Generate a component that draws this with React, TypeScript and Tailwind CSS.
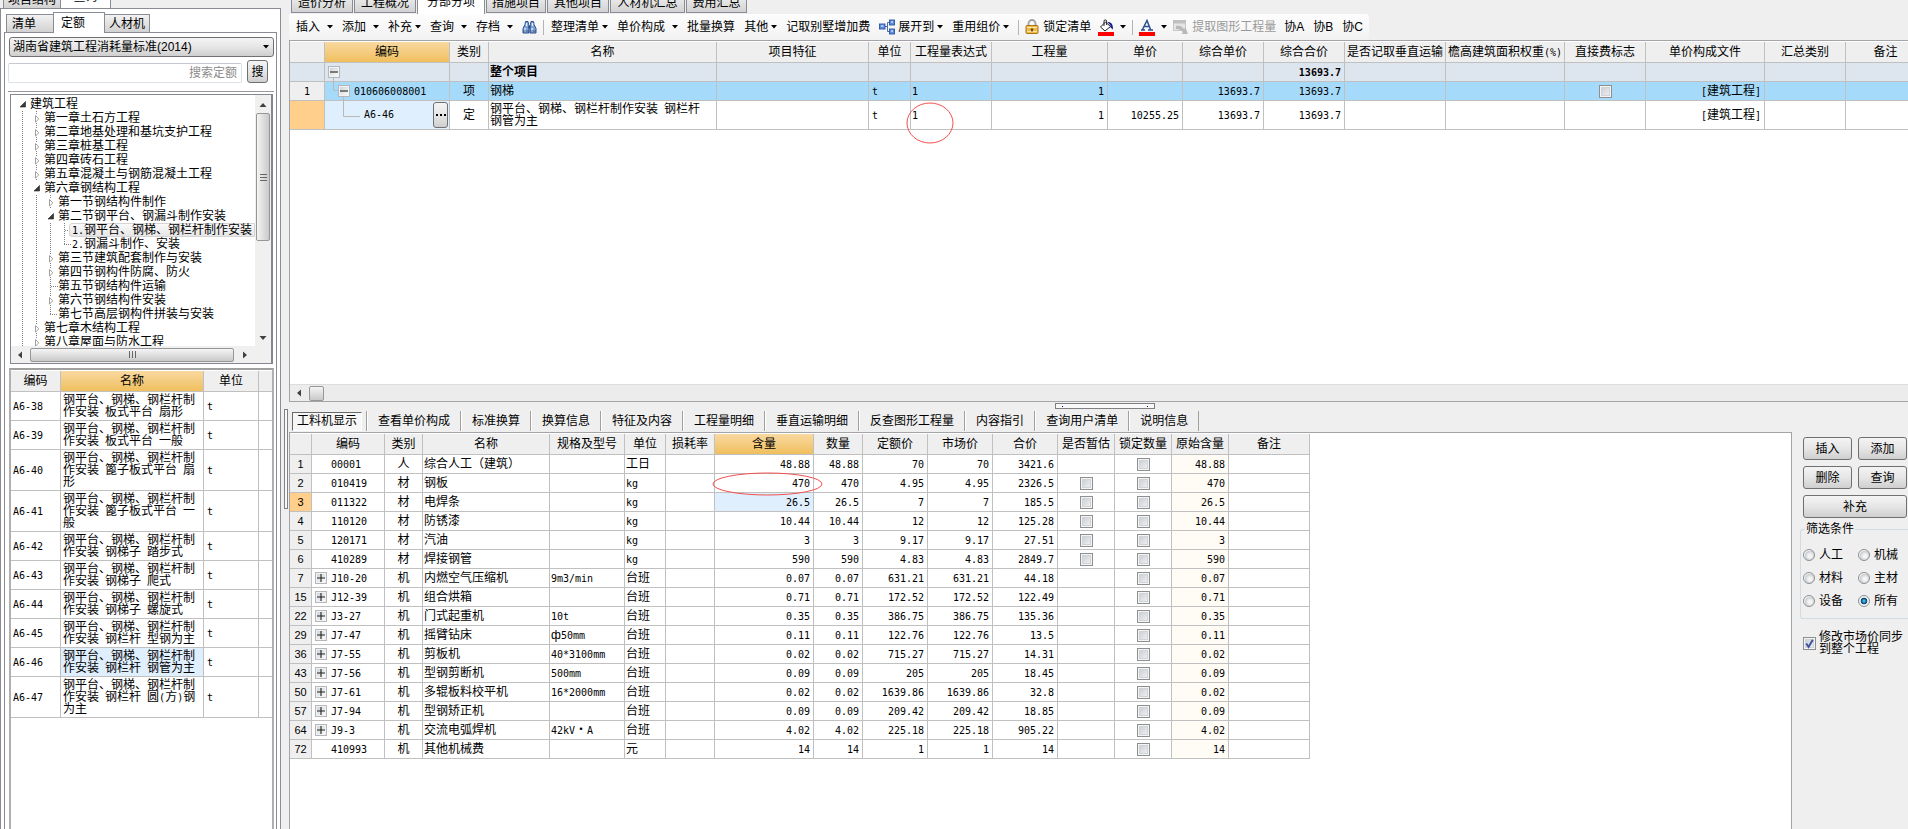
import React from "react";

const LINE = "border-[#c0c0c0]";
const BEVEL = "border border-[#707070] rounded-[3px] bg-linear-to-b from-[#f4f4f4] via-[#e6e6e6] to-[#cfcfcf]";
const GOLD = "bg-linear-to-b from-[#f9d9a0] to-[#f0bf5c]";

/* Sets Latin runs in a narrow fixed-pitch face, half as wide as a Chinese character. */
function Mix({ children }: { children: string }) {
  return (
    <>
      {children.split(/([\x20-\x7e]+)/).map((part, i) =>
        i % 2 === 1 ? (
          <span key={i} className="font-['DejaVu_Sans_Mono',monospace] text-[10px] leading-none">{part}</span>
        ) : (
          part
        )
      )}
    </>
  );
}

function Caret() {
  return (
    <svg width="6" height="4" viewBox="0 0 6 4" className="shrink-0"><path d="M0 0h6L3 3.6z" fill="#000" /></svg>
  );
}

function Check({ label, checked }: { label: string; checked?: boolean }) {
  return (
    <span className="relative inline-block size-[13px] shrink-0 align-middle">
      <input
        type="checkbox"
        aria-label={label}
        defaultChecked={checked}
        className="peer block size-[13px] appearance-none border border-[#8e8f8f] bg-linear-to-br from-[#c4c9cf] to-[#f6f6f6] shadow-[inset_0_0_0_1px_#f4f4f4,inset_0_0_0_2px_#d0d4d8]"
      />
      <svg viewBox="0 0 13 13" className="pointer-events-none absolute inset-0 hidden peer-checked:block">
        <path d="M3.2 6.5l2.4 3.4L9.8 2.8" fill="none" stroke="#4054a0" strokeWidth="2" />
      </svg>
    </span>
  );
}

function Expander({ open, label }: { open?: boolean; label: string }) {
  return (
    <button type="button" aria-label={label} className="block size-[12px] shrink-0 border border-[#b4b8bc] bg-[#f2f2f2] p-px">
      <svg viewBox="0 0 8 8" className="block size-[8px] bg-linear-to-br from-[#cfd4da] to-[#fafafa]">
        <path d={open ? "M0 4h8" : "M0 4h8M4 0v8"} stroke="#222" strokeWidth="1.1" />
      </svg>
    </button>
  );
}

/* ---------- left side ---------- */

type Node = { lv: number; kind: "open" | "closed" | "leaf" | "last"; text: string; on?: boolean };

const TREE: Node[] = [
  { lv: 0, kind: "open", text: "建筑工程" },
  { lv: 1, kind: "closed", text: "第一章土石方工程" },
  { lv: 1, kind: "closed", text: "第二章地基处理和基坑支护工程" },
  { lv: 1, kind: "closed", text: "第三章桩基工程" },
  { lv: 1, kind: "closed", text: "第四章砖石工程" },
  { lv: 1, kind: "closed", text: "第五章混凝土与钢筋混凝土工程" },
  { lv: 1, kind: "open", text: "第六章钢结构工程" },
  { lv: 2, kind: "closed", text: "第一节钢结构件制作" },
  { lv: 2, kind: "open", text: "第二节钢平台、钢漏斗制作安装" },
  { lv: 3, kind: "leaf", text: "1.钢平台、钢梯、钢栏杆制作安装", on: true },
  { lv: 3, kind: "last", text: "2.钢漏斗制作、安装" },
  { lv: 2, kind: "closed", text: "第三节建筑配套制作与安装" },
  { lv: 2, kind: "closed", text: "第四节钢构件防腐、防火" },
  { lv: 2, kind: "leaf", text: "第五节钢结构件运输" },
  { lv: 2, kind: "closed", text: "第六节钢结构件安装" },
  { lv: 2, kind: "last", text: "第七节高层钢构件拼装与安装" },
  { lv: 1, kind: "closed", text: "第七章木结构工程" },
  { lv: 1, kind: "closed", text: "第八章屋面与防水工程" },
];

function Guide({ kind }: { kind: "pass" | Node["kind"] }) {
  const dots = { stroke: "#808080", strokeDasharray: "1 1", fill: "none" };
  return (
    <svg width="14" height="14" viewBox="0 0 14 14" className="block shrink-0">
      {kind === "pass" && <path d="M6.5 0v14" {...dots} />}
      {kind === "leaf" && <path d="M6.5 0v14M7 7.5h7" {...dots} />}
      {kind === "last" && <path d="M6.5 0v7M6 7.5h8" {...dots} />}
      {kind === "closed" && <path d="M5.5 4.5v6.600l3.400-3.300z" fill="#fff" stroke="#a0a0a0" />}
      {kind === "closed" && <path d="M6.5 0v3M6.5 12v2" {...dots} />}
      {kind === "open" && <path d="M9.5 4.5v5.5H4z" fill="#3a3a3a" stroke="#222" strokeWidth=".6" />}
    </svg>
  );
}

function Tree() {
  return (
    <ul className="min-w-0 flex-1 overflow-hidden pt-[2px] pl-[5px]">
      {TREE.map((n) => (
        <li key={n.text} className="flex h-[14px] items-center leading-[14px] whitespace-nowrap">
          {Array.from({ length: n.lv }, (_, i) => <Guide key={i} kind="pass" />)}
          <Guide kind={n.kind} />
          {n.on ? (
            <span className="-ml-[3px] h-[14px] flex-1 rounded-l-[3px] border border-[#d4d4d4] bg-linear-to-b from-[#fafafa] to-[#e6e6e6] pl-[2px] leading-3">
              <Mix>{n.text}</Mix>
            </span>
          ) : (
            <span><Mix>{n.text}</Mix></span>
          )}
        </li>
      ))}
    </ul>
  );
}

function ArrowUp({ className }: { className: string }) {
  return <svg viewBox="0 0 8 8" className={"block size-2 shrink-0 " + className}><path d="M0.5 6h7L4 2z" fill="#404040" /></svg>;
}

const QUOTA = [
  ["A6-38", "钢平台、钢梯、钢栏杆制作安装 板式平台 扇形"],
  ["A6-39", "钢平台、钢梯、钢栏杆制作安装 板式平台 一般"],
  ["A6-40", "钢平台、钢梯、钢栏杆制作安装 篦子板式平台 扇形"],
  ["A6-41", "钢平台、钢梯、钢栏杆制作安装 篦子板式平台 一般"],
  ["A6-42", "钢平台、钢梯、钢栏杆制作安装 钢梯子 踏步式"],
  ["A6-43", "钢平台、钢梯、钢栏杆制作安装 钢梯子 爬式"],
  ["A6-44", "钢平台、钢梯、钢栏杆制作安装 钢梯子 螺旋式"],
  ["A6-45", "钢平台、钢梯、钢栏杆制作安装 钢栏杆 型钢为主"],
  ["A6-46", "钢平台、钢梯、钢栏杆制作安装 钢栏杆 钢管为主"],
  ["A6-47", "钢平台、钢梯、钢栏杆制作安装 钢栏杆 圆(方)钢为主"],
];

const SIDE_TAB = "border border-[#898c95] border-b-0 bg-linear-to-b from-[#f2f2f2] to-[#d2d2d2]";

function Sidebar() {
  return (
    <aside className="flex w-[283px] shrink-0 flex-col bg-[#efefef]">
      <div className="flex h-[8px] shrink-0 items-end overflow-hidden pl-[3px]">
        <button type="button" className={SIDE_TAB + " h-[18px] w-[58px] leading-[18px]"}>项目结构</button>
        <button type="button" className="z-10 h-[22px] w-[50px] border-r border-[#898c95] bg-white leading-[22px]">查询</button>
      </div>
      <div className="mr-[2px] flex min-h-0 flex-1 flex-col border border-b-0 border-[#898c95] bg-white px-[3px] pt-[3px]">
        <div className="flex h-[20px] shrink-0 items-end pl-[2px]">
          <button type="button" className={SIDE_TAB + " h-[18px] w-[47px] border-r-0 pl-[5px] text-left leading-[18px]"}>清单</button>
          <button type="button" className="z-10 -mb-px h-[21px] w-[52px] border border-b-0 border-[#898c95] bg-white pr-[12px] leading-[19px]">定额</button>
          <button type="button" className={SIDE_TAB + " h-[18px] w-[45px] border-l-0 leading-[18px]"}>人材机</button>
        </div>
        <div className="flex min-h-0 flex-1 flex-col border border-b-0 border-[#898c95] pt-[4px] pr-[2px] pl-[3px]">
          <div className="relative ml-px shrink-0">
            <select aria-label="定额标准" className={BEVEL + " block h-[20px] w-full appearance-none pl-[3px]"}>
              <option>湖南省建筑工程消耗量标准(2014)</option>
            </select>
            <span className="pointer-events-none absolute top-[8px] right-[5px]"><Caret /></span>
          </div>
          <div className="mt-[3px] flex shrink-0 items-end">
            <input
              aria-label="搜索定额"
              placeholder="搜索定额"
              className="h-[20px] min-w-0 flex-1 rounded-[2px] border border-[#dde2e8] border-t-[#c4c8d0] pr-[4px] text-right placeholder:text-[#8c8c8c]"
            />
            <button type="button" className={BEVEL + " mr-[6px] ml-[5px] h-[23px] w-[21px]"}>搜</button>
          </div>
          <div className="mt-[8px] shrink-0 border-t border-[#9a9a9a]" />
          <div className="mt-[2px] mr-px ml-[2px] flex h-[270px] shrink-0 flex-col border border-r-2 border-[#828790]">
            <div className="flex min-h-0 flex-1">
              <Tree />
              <div className="flex w-[16px] shrink-0 flex-col items-center bg-[#f0f0f0]">
                <ArrowUp className="mt-[6px] mb-[4px]" />
                <div className="flex h-[128px] w-[14px] flex-col items-center justify-center gap-[2px] rounded-[2px] border border-[#979797] bg-linear-to-r from-[#f5f5f5] to-[#c9c9c9]">
                  <i className="h-px w-[7px] bg-[#666]" /><i className="h-px w-[7px] bg-[#666]" /><i className="h-px w-[7px] bg-[#666]" />
                </div>
                <ArrowUp className="mt-auto mb-[4px] rotate-180" />
              </div>
            </div>
            <div className="flex h-[17px] shrink-0 items-center bg-[#f0f0f0] pr-[22px]">
              <ArrowUp className="mr-[6px] ml-[5px] -rotate-90" />
              <div className="flex h-[14px] flex-1 items-center justify-center gap-[2px] rounded-[2px] border border-[#979797] bg-linear-to-b from-[#f5f5f5] to-[#c9c9c9]">
                <i className="h-[7px] w-px bg-[#666]" /><i className="h-[7px] w-px bg-[#666]" /><i className="h-[7px] w-px bg-[#666]" />
              </div>
              <ArrowUp className="ml-[7px] rotate-90" />
            </div>
          </div>
          <div className="mt-[4px] ml-px min-h-0 flex-1 overflow-hidden border-2 border-b-0 border-[#b0b0b0] border-t-[#a0a0a0] pt-px">
            <table className="w-full table-fixed border-separate border-spacing-0">
              <colgroup><col className="w-[50px]" /><col className="w-[143px]" /><col className="w-[55px]" /><col /></colgroup>
              <thead>
                <tr className="h-[21px] bg-[#efefef]">
                  <th className={"border-r border-b p-0 font-normal " + LINE}>编码</th>
                  <th className={"border-r border-b p-0 font-normal " + LINE + " " + GOLD}>名称</th>
                  <th className={"border-r border-b p-0 font-normal " + LINE}>单位</th>
                  <th className={"border-b p-0 " + LINE} />
                </tr>
              </thead>
              <tbody className="leading-3">
                {QUOTA.map(([code, name]) => (
                  <tr key={code}>
                    <td className={"border-r border-b px-[2px] py-0 " + LINE}><Mix>{code}</Mix></td>
                    <td className={"border-r border-b px-[2px] py-[2px] " + LINE + (code === "A6-46" ? " bg-[#e0effe]" : "")}><Mix>{name}</Mix></td>
                    <td className={"border-r border-b px-[3px] py-0 " + LINE}><Mix>t</Mix></td>
                    <td className={"border-b " + LINE} />
                  </tr>
                ))}
              </tbody>
            </table>
          </div>
        </div>
      </div>
    </aside>
  );
}

/* ---------- toolbar ---------- */

function Menu({ label, tight }: { label: string; tight?: boolean }) {
  return (
    <button type="button" className={"mr-[9px] flex shrink-0 items-center " + (tight ? "gap-[3px]" : "gap-[7px]")}>
      {label}<Caret />
    </button>
  );
}
function ColorMenu({ label, children }: { label: string; children: React.ReactNode }) {
  return (
    <button type="button" aria-label={label} className="mr-[6px] flex shrink-0 items-center gap-[6px]">{children}<Caret /></button>
  );
}
function Plain({ label }: { label: string }) {
  return <button type="button" className="mr-[9px] shrink-0">{label}</button>;
}
function Sep() {
  return <span className="h-[15px] w-px shrink-0 bg-[#b4b4b4]" />;
}

function Binoculars() {
  return (
    <svg width="15" height="15" viewBox="0 0 15 15" className="shrink-0">
      <path d="M3.500 1.500h2.500l.6 3 .4 3v5.500H1V8.500l2-4zM9 1.500h2.500l.5 3 2 4V13H8V7.500l.4-3z" fill="#7fa3d6" stroke="#2c4f8c" />
      <path d="M6.500 5.500h2v3h-2z" fill="#2c4f8c" />
      <path d="M3 8v4M4.500 3v3M10 8v4M10.500 3v3" stroke="#e3edf9" strokeWidth="1.300" />
      <path d="M1 11h6M8 11h6" stroke="#2c4f8c" strokeWidth=".8" />
    </svg>
  );
}
function Nodes() {
  return (
    <svg width="16" height="16" viewBox="0 0 16 16" className="shrink-0">
      <path d="M6 7.500h2.500M8.500 3.500v9M8.500 3.500H11M8.500 12.500H11" stroke="#4b6ea8" fill="none" />
      <g fill="#5a8be0" stroke="#2d559c" strokeWidth=".9">
        <rect x=".5" y="5" width="5.500" height="5" /><rect x="10.500" y="1" width="5" height="5" /><rect x="10.500" y="10" width="5" height="5" />
      </g>
      <path d="M2 7h2.500M12 3h2M12 12h2" stroke="#fff" />
    </svg>
  );
}
function Lock() {
  return (
    <svg width="14" height="16" viewBox="0 0 14 16" className="shrink-0">
      <path d="M3.500 7V4.500a3.500 3.500 0 0 1 7 0V7" fill="none" stroke="#a0a0a0" strokeWidth="1.800" />
      <rect x="1" y="6.500" width="12" height="8" rx="1" fill="#eebb4a" stroke="#a87418" />
      <path d="M2 8.500h10M2 12.500h10" stroke="#fbe3a0" /><path d="M7 9.500v3M5.800 10.500h2.400" stroke="#5d3b05" strokeWidth="1.400" />
    </svg>
  );
}
function Bucket() {
  return (
    <svg width="16" height="17" viewBox="0 0 16 17" className="shrink-0">
      <path d="M7.500 3l5 4.500-5.500 4.500L2.500 8z" fill="#fff" stroke="#222" />
      <path d="M6 7V2.200a1.300 1.300 0 0 1 2.600 0V6" fill="none" stroke="#222" />
      <path d="M9.500 3c4 0 5.500 2 5.500 7.500l-2.500-2V6.500z" fill="#10208a" />
      <path d="M0 13h16v4H0z" fill="#f00" />
    </svg>
  );
}
function FontColor() {
  return (
    <svg width="16" height="17" viewBox="0 0 16 17" className="shrink-0">
      <path d="M3.500 10.500L8 1.500l3.500 9M5.500 7.500h5M2 11h4M9 11h5" fill="none" stroke="#2d4f8e" strokeWidth="1.500" />
      <path d="M0 13h16v4H0z" fill="#f00" />
    </svg>
  );
}
function Extract() {
  return (
    <svg width="16" height="16" viewBox="0 0 16 16" className="shrink-0">
      <rect x=".5" y="1.500" width="12" height="10" fill="#e4e4e4" stroke="#c8c8c8" />
      <path d="M0 1h13v3.500H0z" fill="#c0c0c0" />
      <path d="M3 7c3-1 6 0 8 3l1.500-1.500L15 15H8.500L10 13C8 11 6 9.500 3 10z" fill="#b8b8b8" />
    </svg>
  );
}

function Toolbar() {
  return (
    <div className="flex h-[26px] shrink-0 items-center self-start rounded-r-[3px] bg-linear-to-b from-[#fdfdfd] to-[#f2f2f2] pr-[6px] pl-[7px] whitespace-nowrap">
      <Menu label="插入" /><Menu label="添加" /><Menu label="补充" tight /><Menu label="查询" /><Menu label="存档" />
      <button type="button" aria-label="查找" className="mr-[6px]"><Binoculars /></button>
      <Sep />
      <span className="w-[7px] shrink-0" />
      <Menu label="整理清单" tight /><Menu label="单价构成" /><Plain label="批量换算" /><Menu label="其他" tight />
      <Plain label="记取别墅增加费" />
      <button type="button" className="mr-[9px] flex shrink-0 items-center gap-[3px]"><Nodes />展开到<Caret /></button>
      <Menu label="重用组价" tight />
      <Sep />
      <button type="button" className="mr-[7px] ml-[6px] flex shrink-0 items-center gap-[4px]"><Lock />锁定清单</button>
      <ColorMenu label="填充颜色"><Bucket /></ColorMenu>
      <Sep />
      <span className="w-[6px] shrink-0" />
      <ColorMenu label="字体颜色"><FontColor /></ColorMenu>
      <button type="button" className="mr-[8px] flex shrink-0 items-center gap-[3px] text-[#9a9a9a]"><Extract />提取图形工程量</button>
      <Plain label="协A" /><Plain label="协B" />
      <button type="button">协C</button>
    </div>
  );
}

/* ---------- upper grid ---------- */

const UP_COLS: [string, string][] = [
  ["", "w-[35px]"], ["编码", "w-[125px]"], ["类别", "w-[39px]"], ["名称", "w-[228px]"], ["项目特征", "w-[152px]"],
  ["单位", "w-[42px]"], ["工程量表达式", "w-[81px]"], ["工程量", "w-[116px]"], ["单价", "w-[75px]"], ["综合单价", "w-[81px]"],
  ["综合合价", "w-[81px]"], ["是否记取垂直运输", "w-[101px]"], ["檐高建筑面积权重(%)", "w-[119px]"], ["直接费标志", "w-[81px]"],
  ["单价构成文件", "w-[119px]"], ["汇总类别", "w-[81px]"], ["备注", "w-[80px]"],
];

function Cell({ children, className = "" }: { children?: React.ReactNode; className?: string }) {
  return (
    <td className={"border-r border-b py-0 " + LINE + " " + (className || "pr-[2px] pl-px")}>
      {typeof children === "string" ? <Mix>{children}</Mix> : children}
    </td>
  );
}
const RIGHT = "px-[3px] text-right";
const CENTER = "px-0 text-center";

function UpperGrid() {
  return (
    <table className="w-[1636px] table-fixed border-separate border-spacing-0">
      <colgroup>{UP_COLS.map(([n, w]) => <col key={n} className={w} />)}</colgroup>
      <thead>
        <tr className="h-[21px] bg-[#efefef]">
          {UP_COLS.map(([n]) => (
            <th key={n} className={"border-r border-b p-0 font-normal whitespace-nowrap " + LINE + (n === "编码" ? " " + GOLD : "")}><Mix>{n}</Mix></th>
          ))}
        </tr>
      </thead>
      <tbody className="leading-3">
        <tr className="h-[19px] bg-[#dde5ef] font-bold">
          <Cell />
          <Cell className="relative pl-[3px]">
            <svg width="36" height="60" className="pointer-events-none absolute top-[15px] left-0" fill="none" stroke="#b8b8b8">
              <path d="M8.500 0v12.500H13M18.500 19v19.500H35" />
            </svg>
            <Expander open label="收起整个项目" />
          </Cell>
          <Cell /><Cell>整个项目</Cell><Cell /><Cell /><Cell /><Cell /><Cell /><Cell />
          <Cell className={RIGHT}>13693.7</Cell>
          <Cell /><Cell /><Cell /><Cell /><Cell /><Cell />
        </tr>
        <tr className="h-[19px] bg-[#a6dafa]">
          <Cell className={CENTER + " bg-[#efefef]"}>1</Cell>
          <Cell className="pl-[13px]">
            <span className="flex items-center gap-[4px]"><Expander open label="收起钢梯" /><span><Mix>010606008001</Mix></span></span>
          </Cell>
          <Cell className={CENTER}>项</Cell><Cell>钢梯</Cell><Cell />
          <Cell className="px-[3px]">t</Cell><Cell>1</Cell><Cell className={RIGHT}>1</Cell><Cell />
          <Cell className={RIGHT}>13693.7</Cell><Cell className={RIGHT}>13693.7</Cell><Cell /><Cell />
          <Cell className={CENTER}><Check label="直接费标志" /></Cell>
          <Cell className={RIGHT}>[建筑工程]</Cell><Cell /><Cell />
        </tr>
        <tr className="h-[29px] bg-white">
          <Cell className="bg-[#ffcf8b]" />
          <Cell className="bg-[#e0effe] pr-px pl-[39px]">
            <span className="flex items-center justify-between">
              <Mix>A6-46</Mix>
              <button type="button" aria-label="选择定额" className={BEVEL + " flex h-[26px] w-[15px] items-center justify-center gap-[2px]"}>
                <i className="size-[2px] bg-black" /><i className="size-[2px] bg-black" /><i className="size-[2px] bg-black" />
              </button>
            </span>
          </Cell>
          <Cell className={CENTER}>定</Cell>
          <Cell>钢平台、钢梯、钢栏杆制作安装 钢栏杆 钢管为主</Cell><Cell />
          <Cell className="px-[3px]">t</Cell>
          <Cell className="relative pr-[2px] pl-px">
            <Mix>1</Mix>
            <svg width="48" height="42" className="pointer-events-none absolute top-px -left-[5px]"><ellipse cx="24" cy="21" rx="23" ry="20" fill="none" stroke="#f05050" /></svg>
          </Cell>
          <Cell className={RIGHT}>1</Cell><Cell className={RIGHT}>10255.25</Cell>
          <Cell className={RIGHT}>13693.7</Cell><Cell className={RIGHT}>13693.7</Cell><Cell /><Cell /><Cell />
          <Cell className={RIGHT}>[建筑工程]</Cell><Cell /><Cell />
        </tr>
      </tbody>
    </table>
  );
}

/* ---------- lower grid ---------- */

const LOW_COLS: [string, string][] = [
  ["", "w-[22px]"], ["编码", "w-[73px]"], ["类别", "w-[38px]"], ["名称", "w-[127px]"], ["规格及型号", "w-[75px]"], ["单位", "w-[41px]"],
  ["损耗率", "w-[49px]"], ["含量", "w-[99px]"], ["数量", "w-[49px]"], ["定额价", "w-[65px]"], ["市场价", "w-[65px]"], ["合价", "w-[65px]"],
  ["是否暂估", "w-[57px]"], ["锁定数量", "w-[57px]"], ["原始含量", "w-[57px]"], ["备注", "w-[81px]"],
];

const ROWS = [
  ["1", "00001", "人", "综合人工（建筑）", "", "工日", "48.88", "70", "3421.6"],
  ["2", "010419", "材", "钢板", "", "kg", "470", "4.95", "2326.5"],
  ["3", "011322", "材", "电焊条", "", "kg", "26.5", "7", "185.5"],
  ["4", "110120", "材", "防锈漆", "", "kg", "10.44", "12", "125.28"],
  ["5", "120171", "材", "汽油", "", "kg", "3", "9.17", "27.51"],
  ["6", "410289", "材", "焊接钢管", "", "kg", "590", "4.83", "2849.7"],
  ["7", "J10-20", "机", "内燃空气压缩机", "9m3/min", "台班", "0.07", "631.21", "44.18"],
  ["15", "J12-39", "机", "组合烘箱", "", "台班", "0.71", "172.52", "122.49"],
  ["22", "J3-27", "机", "门式起重机", "10t", "台班", "0.35", "386.75", "135.36"],
  ["29", "J7-47", "机", "摇臂钻床", "ф50mm", "台班", "0.11", "122.76", "13.5"],
  ["36", "J7-55", "机", "剪板机", "40*3100mm", "台班", "0.02", "715.27", "14.31"],
  ["43", "J7-56", "机", "型钢剪断机", "500mm", "台班", "0.09", "205", "18.45"],
  ["50", "J7-61", "机", "多辊板料校平机", "16*2000mm", "台班", "0.02", "1639.86", "32.8"],
  ["57", "J7-94", "机", "型钢矫正机", "", "台班", "0.09", "209.42", "18.85"],
  ["64", "J9-3", "机", "交流电弧焊机", "42kV・A", "台班", "4.02", "225.18", "905.22"],
  ["72", "410993", "机", "其他机械费", "", "元", "14", "1", "14"],
];

function LowerGrid() {
  return (
    <table className="w-[1020px] table-fixed border-separate border-spacing-0">
      <colgroup>{LOW_COLS.map(([n, w]) => <col key={n} className={w} />)}</colgroup>
      <thead>
        <tr className="h-[21px] bg-[#efefef]">
          {LOW_COLS.map(([n]) => (
            <th key={n} className={"border-r border-b p-0 font-normal whitespace-nowrap " + LINE + (n === "含量" ? " " + GOLD : "")}>{n}</th>
          ))}
        </tr>
      </thead>
      <tbody className="leading-3 whitespace-nowrap">
        {ROWS.map(([no, code, kind, name, spec, unit, qty, price, total]) => (
          <tr key={no} className="h-[19px]">
            <td className={"border-r border-b p-0 text-center text-[11px] " + LINE + (no === "3" ? " bg-[#ffcf8b]" : " bg-[#efefef]")}>{no}</td>
            <Cell className="pl-[3px]">
              <span className="flex items-center gap-[4px]">
                {code.startsWith("J") ? <Expander label={"展开" + code} /> : <span className="w-[12px]" />}
                <span><Mix>{code}</Mix></span>
              </span>
            </Cell>
            <Cell className={CENTER}>{kind}</Cell>
            <Cell>{name}</Cell><Cell>{spec}</Cell><Cell>{unit}</Cell><Cell />
            <Cell className={"relative " + RIGHT + (no === "3" ? " bg-[#e0effe]" : "")}>
              <Mix>{qty}</Mix>
              {no === "2" && (
                <svg width="111" height="24" className="pointer-events-none absolute -top-[2px] -left-[3px] z-10"><ellipse cx="55.500" cy="12" rx="54.500" ry="11" fill="none" stroke="#f05050" /></svg>
              )}
            </Cell>
            <Cell className={RIGHT}>{qty}</Cell><Cell className={RIGHT}>{price}</Cell><Cell className={RIGHT}>{price}</Cell><Cell className={RIGHT}>{total}</Cell>
            <Cell className={CENTER}>{kind === "材" && <Check label={"是否暂估 " + name} />}</Cell>
            <Cell className={CENTER}><Check label={"锁定数量 " + name} /></Cell>
            <Cell className={RIGHT + " bg-[#fffbf5]"}>{qty}</Cell>
            <Cell />
          </tr>
        ))}
      </tbody>
    </table>
  );
}

const LOWER_TABS = ["查看单价构成", "标准换算", "换算信息", "特征及内容", "工程量明细", "垂直运输明细", "反查图形工程量", "内容指引", "查询用户清单", "说明信息"];
const TOP_TABS: [string, string][] = [
  ["造价分析", "w-[62px]"], ["工程概况", "w-[62px]"], ["分部分项", "w-[68px]"], ["措施项目", "w-[60px]"],
  ["其他项目", "w-[62px]"], ["人材机汇总", "w-[75px]"], ["费用汇总", "w-[61px]"],
];
const FILTERS = ["人工", "机械", "材料", "主材", "设备", "所有"];

function Push({ children, className = "" }: { children: string; className?: string }) {
  return <button type="button" className={BEVEL + " h-[23px] " + className}>{children}</button>;
}

function SidePanel() {
  return (
    <section className="w-[116px] shrink-0 pl-[11px]">
      <div className="mt-[5px] mr-px grid grid-cols-2 gap-[6px]">
        <Push>插入</Push><Push>添加</Push><Push>删除</Push><Push>查询</Push><Push className="col-span-2">补充</Push>
      </div>
      <fieldset className="mt-[5px] -ml-[3px] h-[96px] rounded-l-[3px] border border-r-0 border-[#d0dbe4] pl-[2px]">
        <legend className="ml-[2px] px-px leading-3">筛选条件</legend>
        <div className="mt-[13px] grid grid-cols-[55px_1fr] gap-y-[9px]">
          {FILTERS.map((f) => (
            <label key={f} className="flex h-[14px] items-center gap-[4px]">
              <input
                type="radio"
                name="filter"
                defaultChecked={f === "所有"}
                className="size-[12px] appearance-none rounded-full border border-[#8e8f8f] bg-[radial-gradient(circle_at_60%_60%,#f4f4f4_20%,#c8ccd0_60%,#f4f4f4_62%)] checked:bg-[radial-gradient(circle_at_50%_50%,#3fb4e4_10%,#0b3f6b_42%,#f0f4f6_52%)]"
              />
              {f}
            </label>
          ))}
        </div>
      </fieldset>
      <label className="mt-[12px] flex items-center gap-[3px] leading-3">
        <Check label="修改市场价同步到整个工程" checked />
        <span className="w-[86px]">修改市场价同步到整个工程</span>
      </label>
    </section>
  );
}

export default function App() {
  return (
    <div className="flex h-screen overflow-hidden bg-[#efefef] font-['Liberation_Sans','Noto_Sans_CJK_SC',sans-serif] text-[12px] leading-[16px] text-black">
      <Sidebar />
      <div className="flex w-[6px] shrink-0 flex-col">
        <div className="flex-[409]" />
        <div className="ml-px h-[100px] w-[4px] border border-[#808080] bg-[#f8f8f8]" />
        <div className="flex-[320]" />
      </div>
      <main className="flex min-w-0 flex-1 flex-col">
        <section className="flex min-h-0 flex-[402] flex-col">
          <div className="flex h-[14px] shrink-0 items-end gap-px overflow-hidden pl-[2px]">
            {TOP_TABS.map(([n, w]) => (
              <button
                key={n}
                type="button"
                className={"shrink-0 border border-[#898c95] " + w + (n === "分部分项" ? " h-[25px] border-b-0 bg-white leading-[21px]" : " mb-px h-[20px] bg-linear-to-b from-[#f2f2f2] to-[#d2d2d2] leading-[18px]")}
              >
                {n}
              </button>
            ))}
          </div>
          <Toolbar />
          <div className="flex min-h-0 flex-1 flex-col overflow-hidden border border-r-0 border-[#a4a4a8] bg-white">
            <div className="min-h-0 flex-1 overflow-hidden pt-px"><UpperGrid /></div>
            <div className="flex h-[17px] shrink-0 items-center border-t border-[#dcdcdc] bg-[#ececec]">
              <ArrowUp className="mr-[6px] ml-[5px] -rotate-90" />
              <div className="h-[15px] w-[15px] rounded-[2px] border border-[#979797] bg-linear-to-b from-[#f5f5f5] to-[#c9c9c9]" />
            </div>
          </div>
        </section>
        <div className="h-[8px] shrink-0 pt-px">
          <div className="ml-[47.3%] flex h-[6px] w-[100px] items-center justify-between border border-[#808080] bg-[#f8f8f8] px-[6px]">
            <i className="size-px bg-[#000080]" /><i className="size-px bg-[#000080]" />
          </div>
        </div>
        <section className="flex min-h-0 flex-[419] flex-col">
          <nav className="flex h-[22px] shrink-0 items-center pl-[3px]">
            <button type="button" className="mr-[4px] h-[19px] w-[70px] border border-[#fff] border-t-[#696969] border-l-[#696969] bg-[#f6f6f6]">工料机显示</button>
            <span className="h-[20px] w-px bg-[#a0a0a0]" />
            {LOWER_TABS.map((t) => (
              <button key={t} type="button" className="h-[20px] shrink-0 border-r border-l border-[#a0a0a0] border-l-white px-[10px]">{t}</button>
            ))}
          </nav>
          <div className="flex min-h-0 flex-1">
            <div className="min-w-0 flex-1 overflow-hidden border border-b-0 border-[#a4a4a8] bg-white pt-px"><LowerGrid /></div>
            <SidePanel />
          </div>
        </section>
      </main>
    </div>
  );
}
